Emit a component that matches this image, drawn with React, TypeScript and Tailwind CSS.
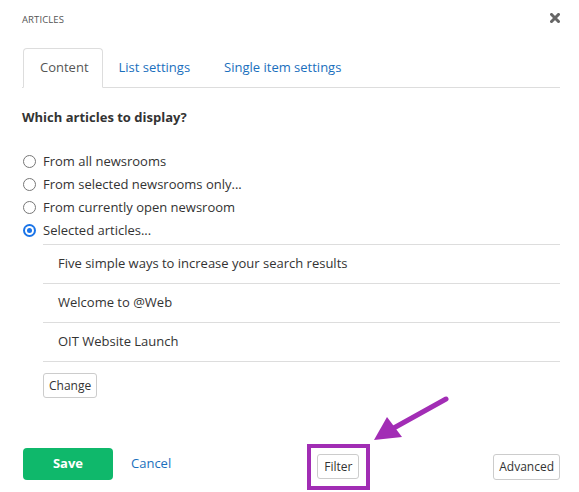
import React from 'react';

const options = [
  { label: 'From all newsrooms', checked: false },
  { label: 'From selected newsrooms only...', checked: false },
  { label: 'From currently open newsroom', checked: false },
  { label: 'Selected articles...', checked: true },
];

const articles = ['Five simple ways to increase your search results', 'Welcome to @Web', 'OIT Website Launch'];

const Radio = ({ checked }: { checked: boolean }) =>
  checked ? (
    <span className="w-[13px] h-[13px] rounded-full bg-[#1a74e8] flex items-center justify-center shrink-0">
      <span className="w-[9px] h-[9px] rounded-full bg-white flex items-center justify-center">
        <span className="w-[5px] h-[5px] rounded-full bg-[#1a74e8]" />
      </span>
    </span>
  ) : (
    <span className="w-[13px] h-[13px] rounded-full border border-[#777] bg-white shrink-0" />
  );

export default function App() {
  return (
    <div
      className="relative w-[579px] h-[492px] bg-white text-[#333] pl-[22px] pr-[19px] overflow-hidden"
      style={{ fontFamily: '"Open Sans", "Noto Sans", sans-serif' }}
    >
      {/* Header */}
      <div className="h-[40px] flex items-center justify-between">
        <span className="text-[9.5px] uppercase text-[#555] tracking-[0.1px]">Articles</span>
        <svg width="10" height="10" viewBox="0 0 10 10" className="-mt-[5px]">
          <path d="M1.5 1.5 L8.5 8.5 M8.5 1.5 L1.5 8.5" stroke="#666" strokeWidth="3" strokeLinecap="square" />
        </svg>
      </div>

      {/* Tabs */}
      <ul className="mt-[8px] flex border-b border-[#ddd] text-[13px]">
        <li className="h-[40px] -mb-px pl-4 pr-[13px] flex items-center border border-[#ddd] border-b-white rounded-t-[4px] bg-white text-[#555] ml-px">
          Content
        </li>
        <li className="h-[39px] px-4 flex items-center text-[#1a6fbd]">List settings</li>
        <li className="h-[39px] pl-[18px] pr-4 flex items-center text-[#1a6fbd]">Single item settings</li>
      </ul>

      {/* Body */}
      <div className="mt-[20px] text-[13px] font-bold leading-[18px]">Which articles to display?</div>

      <div className="mt-[24px] flex flex-col">
        {options.map((o) => (
          <label key={o.label} className="h-[23px] flex items-center gap-[7px] text-[13px] ml-px">
            <Radio checked={o.checked} />
            <span>{o.label}</span>
          </label>
        ))}
      </div>

      <div className="mt-[2px] ml-[21px] border-b border-[#ddd]">
        {articles.map((a) => (
          <div key={a} className="h-[39px] border-t border-[#ddd] flex items-center pl-[15px] text-[13px]">
            {a}
          </div>
        ))}
      </div>

      <button className="mt-[11px] ml-[21px] h-[25px] px-[5px] border border-[#ccc] rounded-[3px] bg-white text-[12px] text-[#333]">
        Change
      </button>

      {/* Footer */}
      <div className="mt-[46px] flex items-start">
        <button className="mt-[4px] ml-px w-[90px] h-[32px] rounded-[4px] bg-[#0fb86b] text-white font-bold text-[13px]">
          Save
        </button>
        <span className="mt-[4px] h-[32px] flex items-center ml-[18px] text-[13px] text-[#1a6fbd]">Cancel</span>
        <div className="ml-[136px] border-4 border-[#a12db4] pt-[6px] pl-[6px] pr-[7px] pb-[7px]">
          <button className="h-[25px] px-[6px] border border-[#ccc] rounded-[3px] bg-white text-[12px] text-[#333] block">
            Filter
          </button>
        </div>
        <button className="mt-[10px] ml-auto h-[26px] px-[5px] border border-[#ccc] rounded-[3px] bg-white text-[12px] text-[#333]">
          Advanced
        </button>
      </div>

      {/* Annotation arrow */}
      <svg className="absolute left-0 top-0 pointer-events-none" width="579" height="492" viewBox="0 0 579 492">
        <path d="M446 399 L392 429" stroke="#a22db5" strokeWidth="5" strokeLinecap="round" />
        <polygon points="374,440 387,417 402,437" fill="#a22db5" />
      </svg>
    </div>
  );
}
